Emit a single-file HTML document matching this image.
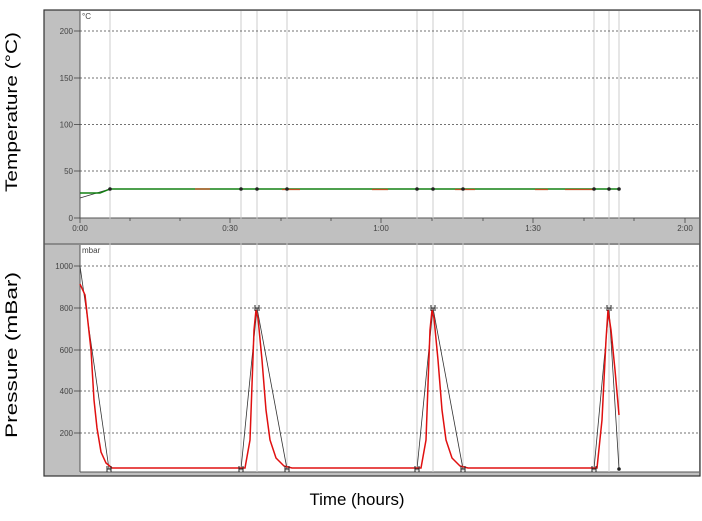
<!DOCTYPE html>
<html><head><style>
body{margin:0;background:#fff;width:702px;height:521px;overflow:hidden}
svg{display:block}
.t{font-family:"Liberation Sans",sans-serif;font-size:8px;fill:#444}
.lab{font-family:"Liberation Sans",sans-serif;font-size:17px;fill:#000}
</style></head><body>
<svg width="702" height="521" xmlns="http://www.w3.org/2000/svg">
<rect x="44" y="10" width="656" height="466" fill="#c0c0c0" stroke="#333" stroke-width="1.2"/>
<rect x="80" y="11" width="619" height="207" fill="#fff"/>
<rect x="80" y="245" width="619" height="227" fill="#fff"/>
<line x1="44" y1="244" x2="700" y2="244" stroke="#555" stroke-width="1"/>
<line x1="80" y1="11" x2="80" y2="218" stroke="#555"/>
<line x1="80" y1="218" x2="699" y2="218" stroke="#555"/>
<line x1="80" y1="245" x2="80" y2="472" stroke="#555"/>
<line x1="80" y1="472" x2="699" y2="472" stroke="#555"/>
<g stroke="#ccc" stroke-width="1">
<line x1="110" y1="11" x2="110" y2="472"/><line x1="241" y1="11" x2="241" y2="472"/><line x1="257" y1="11" x2="257" y2="472"/><line x1="287" y1="11" x2="287" y2="472"/>
<line x1="417" y1="11" x2="417" y2="472"/><line x1="433" y1="11" x2="433" y2="472"/><line x1="463" y1="11" x2="463" y2="472"/>
<line x1="594" y1="11" x2="594" y2="472"/><line x1="609" y1="11" x2="609" y2="472"/><line x1="619" y1="11" x2="619" y2="472"/>
</g>
<rect x="80" y="218.5" width="619" height="25" fill="#c0c0c0"/>
<g stroke="#444" stroke-dasharray="2,2" stroke-width="0.8">
<line x1="80" y1="31" x2="699" y2="31"/><line x1="80" y1="78" x2="699" y2="78"/><line x1="80" y1="124.5" x2="699" y2="124.5"/><line x1="80" y1="171" x2="699" y2="171"/>
<line x1="80" y1="266" x2="699" y2="266"/><line x1="80" y1="308" x2="699" y2="308"/><line x1="80" y1="350" x2="699" y2="350"/><line x1="80" y1="391" x2="699" y2="391"/><line x1="80" y1="433" x2="699" y2="433"/>
</g>
<g stroke="#444" stroke-width="0.8">
<line x1="74" y1="31" x2="80" y2="31"/><line x1="74" y1="78" x2="80" y2="78"/><line x1="74" y1="124.5" x2="80" y2="124.5"/><line x1="74" y1="171" x2="80" y2="171"/><line x1="74" y1="218" x2="80" y2="218"/>
<line x1="74" y1="266" x2="80" y2="266"/><line x1="74" y1="308" x2="80" y2="308"/><line x1="74" y1="350" x2="80" y2="350"/><line x1="74" y1="391" x2="80" y2="391"/><line x1="74" y1="433" x2="80" y2="433"/>
<line x1="80" y1="218" x2="80" y2="223"/><line x1="230" y1="218" x2="230" y2="223"/><line x1="381" y1="218" x2="381" y2="223"/><line x1="533" y1="218" x2="533" y2="223"/><line x1="685" y1="218" x2="685" y2="223"/>
<line x1="130" y1="218" x2="130" y2="221"/><line x1="180" y1="218" x2="180" y2="221"/><line x1="281" y1="218" x2="281" y2="221"/><line x1="331" y1="218" x2="331" y2="221"/><line x1="432" y1="218" x2="432" y2="221"/><line x1="483" y1="218" x2="483" y2="221"/><line x1="584" y1="218" x2="584" y2="221"/><line x1="634" y1="218" x2="634" y2="221"/>
</g>
<g class="t" text-anchor="end">
<text x="73" y="34">200</text><text x="73" y="81">150</text><text x="73" y="127.5">100</text><text x="73" y="174">50</text><text x="73" y="221">0</text>
<text x="73" y="269">1000</text><text x="73" y="311">800</text><text x="73" y="353">600</text><text x="73" y="394">400</text><text x="73" y="436">200</text>
</g>
<g class="t" text-anchor="middle">
<text x="80" y="231">0:00</text><text x="230" y="231">0:30</text><text x="381" y="231">1:00</text><text x="533" y="231">1:30</text><text x="685" y="231">2:00</text>
</g>
<text class="t" x="82" y="19" font-size="7">°C</text>
<text class="t" x="82" y="253" font-size="7">mbar</text>
<polyline points="80,198 110,189" fill="none" stroke="#333" stroke-width="0.8"/>
<polyline points="80,193 100,193 110,189 619,189" fill="none" stroke="#128012" stroke-width="1.4"/>
<g stroke="#c05020" stroke-width="1.3"><line x1="195" y1="189" x2="210" y2="189"/><line x1="282" y1="189.5" x2="300" y2="189.5"/><line x1="372" y1="189.5" x2="388" y2="189.5"/><line x1="455" y1="189.5" x2="475" y2="189.5"/><line x1="535" y1="189.5" x2="548" y2="189.5"/><line x1="565" y1="189.5" x2="595" y2="189.5"/></g>
<g fill="#222"><circle cx="110" cy="189" r="1.8"/><circle cx="241" cy="189" r="1.8"/><circle cx="257" cy="189" r="1.8"/><circle cx="287" cy="189" r="1.8"/><circle cx="417" cy="189" r="1.8"/><circle cx="433" cy="189" r="1.8"/><circle cx="463" cy="189" r="1.8"/><circle cx="594" cy="189" r="1.8"/><circle cx="609" cy="189" r="1.8"/><circle cx="619" cy="189" r="1.8"/></g>
<polyline points="80,266 109,469" fill="none" stroke="#333" stroke-width="0.8"/>
<polyline points="241,469 257,308 287,469" fill="none" stroke="#333" stroke-width="0.8"/>
<polyline points="417,469 433,308 463,469" fill="none" stroke="#333" stroke-width="0.8"/>
<polyline points="594,469 609,308 619,469" fill="none" stroke="#333" stroke-width="0.8"/>
<path d="M80,284 L85,295 L91,350 L94,400 L97,428 L101,452 L106,463 L112,468 L245,468 L250,440 L254,330 L256,310 L258,318 L262,360 L266,410 L270,440 L276,458 L284,466 L292,468 L421,468 L426,440 L430,330 L432,310 L434,318 L438,360 L442,410 L446,440 L452,458 L460,466 L468,468 L597,468 L602,420 L606,340 L608,310 L611,330 L615,370 L619,415" fill="none" stroke="#e01010" stroke-width="1.5"/>
<g stroke="#222" stroke-width="1" fill="none">
<path d="M107,466v6M111,466v6M107,469h4"/><path d="M239,466v6M243,466v6M239,469h4"/><path d="M285,466v6M289,466v6M285,469h4"/><path d="M255,305v6M259,305v6M255,308h4"/>
<path d="M415,466v6M419,466v6M415,469h4"/><path d="M461,466v6M465,466v6M461,469h4"/><path d="M431,305v6M435,305v6M431,308h4"/>
<path d="M592,466v6M596,466v6M592,469h4"/><path d="M607,305v6M611,305v6M607,308h4"/>
</g>
<circle cx="619" cy="469" r="1.8" fill="#222"/>
<text class="lab" text-anchor="middle" textLength="160" lengthAdjust="spacingAndGlyphs" transform="translate(17,112) rotate(-90)">Temperature (°C)</text>
<text class="lab" text-anchor="middle" textLength="166" lengthAdjust="spacingAndGlyphs" transform="translate(17,355) rotate(-90)">Pressure (mBar)</text>
<text class="lab" x="357" y="505" text-anchor="middle" textLength="95" lengthAdjust="spacingAndGlyphs">Time (hours)</text>
</svg>
</body></html>
